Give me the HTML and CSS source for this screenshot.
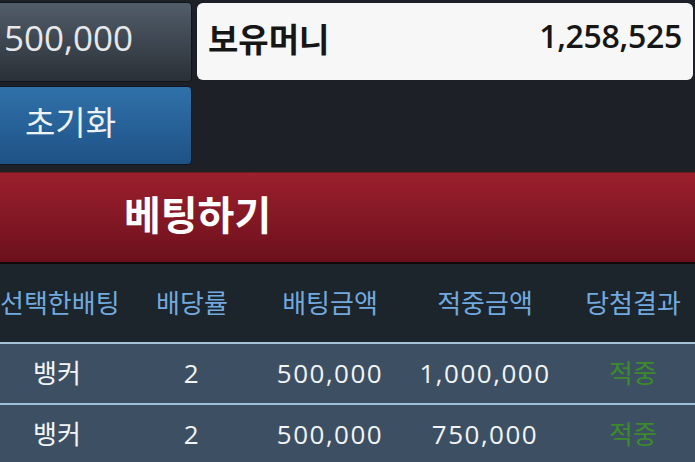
FILE: index.html
```html
<!DOCTYPE html>
<html lang="ko">
<head>
<meta charset="utf-8">
<title>베팅</title>
<link rel="stylesheet" href="styles.css">
</head>
<body>
<div class="top">
  <div class="left-col">
    <div class="amount-box"><span class="amount">500,000</span></div>
    <button class="reset-btn">초기화</button>
  </div>
  <div class="money-box">
    <span class="money-label">보유머니</span>
    <span class="money-value">1,258,525</span>
  </div>
</div>
<button class="bet-bar">베팅하기</button>
<div class="table">
  <div class="row head">
    <div class="cell">선택한배팅</div>
    <div class="cell">배당률</div>
    <div class="cell">배팅금액</div>
    <div class="cell">적중금액</div>
    <div class="cell">당첨결과</div>
  </div>
  <div class="row body">
    <div class="cell">뱅커</div>
    <div class="cell num">2</div>
    <div class="cell num">500,000</div>
    <div class="cell num">1,000,000</div>
    <div class="cell win">적중</div>
  </div>
  <div class="row body">
    <div class="cell">뱅커</div>
    <div class="cell num">2</div>
    <div class="cell num">500,000</div>
    <div class="cell num">750,000</div>
    <div class="cell win">적중</div>
  </div>
</div>
</body>
</html>
```
FILE: styles.css
```css
html, body {
  margin: 0;
  padding: 0;
}
body {
  background: #1d2127;
  font-family: "Open Sans", "Noto Sans CJK KR", sans-serif;
  overflow: hidden;
  width: 695px;
  height: 462px;
}
.top {
  display: grid;
  grid-template-columns: 192px 1fr;
  column-gap: 5px;
  padding-top: 2px;
}
.left-col {
  display: flex;
  flex-direction: column;
  gap: 4px;
}
.amount-box {
  height: 78px;
  margin-left: -8px;
  border: 1px solid #111418;
  border-radius: 4px;
  background: linear-gradient(#515d6a, #2a3037);
  display: flex;
  align-items: center;
  padding-left: 11px;
  box-sizing: content-box;
}
.amount {
  color: #e6e8ea;
  font-size: 35px;
  line-height: 1;
  padding-bottom: 10px;
}
.reset-btn {
  height: 79px;
  margin: 0 0 0 -8px;
  border: 1px solid #0f1520;
  border-radius: 4px;
  background: linear-gradient(#3071aa, #1e5285);
  color: #eef3f8;
  font-family: "Noto Sans CJK KR", sans-serif;
  font-size: 33px;
  text-align: left;
  padding: 0 0 9px 32px;
}
.money-box {
  margin-top: 1px;
  margin-right: 2px;
  height: 77px;
  background: #f7f7f8;
  border-radius: 6px;
  display: flex;
  align-items: center;
  justify-content: space-between;
  padding: 0 11px 0 11px;
  color: #161616;
}
.money-label {
  font-family: "Noto Sans CJK KR", sans-serif;
  font-weight: 700;
  font-size: 33px;
  line-height: 1;
  padding-bottom: 6px;
}
.money-value {
  font-weight: 600;
  font-size: 32px;
  line-height: 1;
  letter-spacing: -0.3px;
  padding-bottom: 12px;
}
.bet-bar {
  display: block;
  width: 100%;
  height: 92px;
  margin: 7px 0 0;
  border: 0;
  border-top: 1px solid #6e1f1c;
  border-bottom: 2px solid #12080a;
  background: linear-gradient(#9c1f2d, #6b111c);
  color: #ffffff;
  font-family: "Noto Sans CJK KR", sans-serif;
  font-weight: 700;
  font-size: 40px;
  line-height: 1;
  text-align: left;
  padding: 0 0 10px 124px;
}
.row {
  display: grid;
  grid-template-columns: 114px 156px 120px 190px 106px 1fr;
  align-items: center;
}
.row.head {
  height: 78px;
  background: #1c242c;
  color: #72a9de;
  font-size: 26px;
  border-bottom: 2px solid #a7c3db;
}
.row.body {
  height: 59px;
  background: #3d5063;
  color: #f2f4f6;
  font-size: 26px;
  border-bottom: 2px solid #a2c0da;
}
.cell {
  text-align: center;
  white-space: nowrap;
  font-family: "Noto Sans CJK KR", sans-serif;
  line-height: 1;
  padding-bottom: 3px;
}
.cell.num {
  font-family: "Open Sans", sans-serif;
  font-size: 26px;
  letter-spacing: 1.5px;
  padding-bottom: 1px;
}
.cell.win {
  color: #3b8a2c;
}
```
